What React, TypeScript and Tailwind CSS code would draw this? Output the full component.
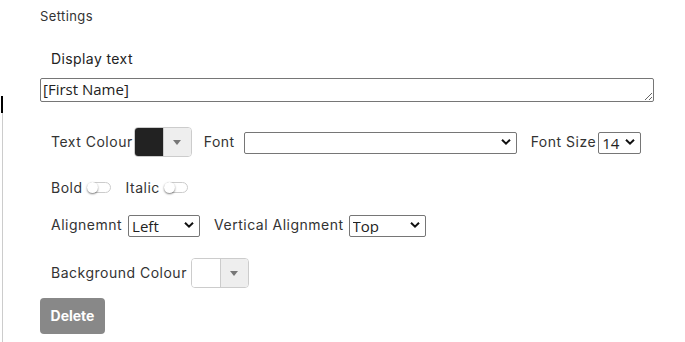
import { useState } from 'react';

const LABEL = 'text-[14px] tracking-[0.5px] text-[#333]';

function Chevron() {
  return (
    <svg
      className="pointer-events-none absolute right-[6px] top-1/2 -translate-y-1/2"
      width="10"
      height="7"
      viewBox="0 0 10 7"
    >
      <path d="M1 1.2 5 5.2 9 1.2" fill="none" stroke="#111" strokeWidth="2" />
    </svg>
  );
}

function Select({ value, width }: { value: string; width: string }) {
  return (
    <div className={`relative h-[22px] ${width}`}>
      <select
        defaultValue={value}
        className="h-full w-full appearance-none rounded-[2px] border border-[#767676] bg-white pl-[3px] text-[15px] leading-none text-[#222] outline-none [font-family:'Open_Sans',sans-serif]"
      >
        <option value={value}>{value}</option>
      </select>
      <Chevron />
    </div>
  );
}

function ColourPicker({ colour }: { colour: string }) {
  return (
    <div className="flex h-[30px] w-[58px] overflow-hidden rounded-[4px] border border-[#ccc]">
      <div className="w-[28px]" style={{ background: colour }} />
      <div className="flex flex-1 items-center justify-center border-l border-[#ccc] bg-[#eee]">
        <span className="mt-[2px] h-0 w-0 border-x-[4px] border-t-[5px] border-x-transparent border-t-[#777]" />
      </div>
    </div>
  );
}

function Toggle() {
  const [on, setOn] = useState(false);
  return (
    <button
      onClick={() => setOn(!on)}
      className="relative ml-[4px] h-[11px] w-[24px] rounded-full border border-[#ccc] bg-white"
    >
      <span
        className={`absolute top-[-1px] h-[11px] w-[11px] rounded-full bg-white shadow-[0_1px_2px_rgba(0,0,0,0.5)] ${on ? 'right-[-1px]' : 'left-[-1px]'}`}
      />
    </button>
  );
}

export default function App() {
  return (
    <div className="relative h-[342px] w-[685px] bg-white [font-family:Inter,'Liberation_Sans',sans-serif]">
      <div className="absolute left-[1px] top-[96px] h-[17px] w-[2px] bg-black" />
      <div className="absolute bottom-0 left-[2px] top-[113px] w-px bg-[#ccc]" />

      <div className="flex flex-col pl-[40px] pt-[7px]">
        <div className="text-[13px] tracking-[0.4px] text-[#333]">Settings</div>

        <div className="ml-[11px] mt-[21px] text-[14px] tracking-[0.4px] text-[#222]">Display text</div>

        <textarea
          defaultValue="[First Name]"
          className="mt-[9px] h-[24px] w-[614px] resize-y overflow-hidden rounded-[2px] border border-[#767676] px-[2px] py-0 text-[15px] leading-[21px] text-[#222] outline-none [font-family:'Open_Sans',sans-serif]"
        />

        <div className="ml-[11px] mt-[25px] flex items-center">
          <span className={`${LABEL} mr-[1px]`}>Text Colour</span>
          <ColourPicker colour="#222" />
          <span className={`${LABEL} ml-[12px] mr-[9px]`}>Font</span>
          <Select value="" width="w-[273px]" />
          <span className={`${LABEL} ml-[14px] mr-[2px]`}>Font Size</span>
          <Select value="14" width="w-[43px]" />
        </div>

        <div className="ml-[11px] mt-[20px] flex items-center">
          <span className={LABEL}>Bold</span>
          <Toggle />
          <span className={`${LABEL} ml-[15px]`}>Italic</span>
          <Toggle />
        </div>

        <div className="ml-[11px] mt-[16px] flex items-center">
          <span className={`${LABEL} mr-[6px]`}>Alignemnt</span>
          <Select value="Left" width="w-[72px]" />
          <span className={`${LABEL} ml-[14px] mr-[5px]`}>Vertical Alignment</span>
          <Select value="Top" width="w-[77px]" />
        </div>

        <div className="ml-[11px] mt-[22px] flex items-center">
          <span className={`${LABEL} mr-[4px]`}>Background Colour</span>
          <ColourPicker colour="#fff" />
        </div>

        <button className="mt-[10px] h-[36px] w-[65px] rounded-[4px] bg-[#888] text-[14px] font-bold text-white">
          Delete
        </button>
      </div>
    </div>
  );
}
